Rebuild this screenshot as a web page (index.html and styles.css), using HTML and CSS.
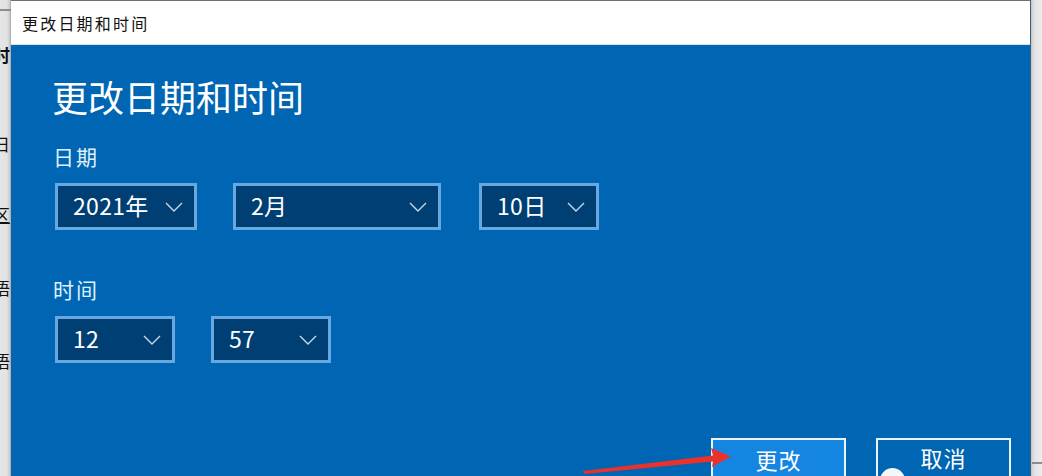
FILE: index.html
```html
<!DOCTYPE html>
<html lang="zh-CN">
<head>
<meta charset="utf-8">
<title>更改日期和时间</title>
<link rel="stylesheet" href="styles.css">
</head>
<body>
<div class="left">
  <div class="left-bar"></div>
  <div class="frag frag-bold"><span>时</span></div>
  <div class="frag frag-2"><span>日</span></div>
  <div class="frag frag-3"><span class="ul">区</span></div>
  <div class="frag frag-4"><span>语</span></div>
  <div class="frag frag-5"><span>语</span></div>
</div>
<div class="dialog">
  <div class="titlebar">更改日期和时间</div>
  <div class="content">
    <h1 class="heading">更改日期和时间</h1>
    <div class="label label-date">日期</div>
    <div class="row">
      <div class="select w-year"><span>2021年</span><svg class="chev" viewBox="0 0 18 10" width="18" height="10"><polyline points="1,1 9,9 17,1"/></svg></div>
      <div class="select w-month"><span>2月</span><svg class="chev" viewBox="0 0 18 10" width="18" height="10"><polyline points="1,1 9,9 17,1"/></svg></div>
      <div class="select w-day"><span>10日</span><svg class="chev" viewBox="0 0 18 10" width="18" height="10"><polyline points="1,1 9,9 17,1"/></svg></div>
    </div>
    <div class="label label-time">时间</div>
    <div class="row">
      <div class="select w-time"><span>12</span><svg class="chev" viewBox="0 0 18 10" width="18" height="10"><polyline points="1,1 9,9 17,1"/></svg></div>
      <div class="select w-time"><span>57</span><svg class="chev" viewBox="0 0 18 10" width="18" height="10"><polyline points="1,1 9,9 17,1"/></svg></div>
    </div>
    <div class="buttons">
      <div class="btn btn-primary">更改</div>
      <div class="btn btn-cancel">取消</div>
    </div>
  </div>
</div>
<div class="right">
  <div class="right-line"></div>
</div>
<div class="dot"></div>
<svg class="arrow" viewBox="0 0 1042 476" width="1042" height="476">
  <polygon points="583,471 713,455.5 711,448 731,456.5 712,467 713,461.5 584,474" fill="#e8322b"/>
</svg>
</body>
</html>
```
FILE: styles.css
```css
html, body {
  margin: 0;
  padding: 0;
}
body {
  width: 1042px;
  height: 476px;
  overflow: hidden;
  display: flex;
  background: #ebebeb;
  font-family: "Noto Sans CJK SC", "Noto Sans", sans-serif;
  position: relative;
}
.left {
  width: 11px;
  flex: none;
  background: linear-gradient(to right, #e6e6e6 0, #e2e2e2 7px, #c8c8c8 10px, #9a9a9a 11px);
  overflow: hidden;
  display: flex;
  flex-direction: column;
}
.left-bar {
  height: 2px;
  margin-top: 9px;
  background: #8e8e8e;
}
.frag {
  display: flex;
  justify-content: flex-end;
  padding-right: 1px;
  white-space: nowrap;
  font-size: 17px;
  line-height: 20px;
  color: #111;
  height: 20px;
}
.frag span { flex: none; }
.frag-bold { font-weight: 700; margin-top: 34px; }
.frag-2 { margin-top: 69px; }
.frag-3 { margin-top: 51px; }
.frag-3 .ul { text-decoration: underline; }
.frag-4 { margin-top: 53px; }
.frag-5 { margin-top: 53px; }

.dialog {
  width: 1020px;
  flex: none;
  display: flex;
  flex-direction: column;
  border-top: 1px solid #707070;
  border-right: 1px solid #3a5f80;
  box-sizing: border-box;
}
.titlebar {
  height: 44px;
  flex: none;
  background: #ffffff;
  display: flex;
  align-items: center;
  padding-left: 11px;
  font-size: 16px;
  letter-spacing: 2.2px;
  color: #111;
  border-bottom: 1px solid #cfe6f2;
  box-sizing: border-box;
}
.content {
  flex: 1;
  background: #0066b3;
  padding: 30px 19px 0 42px;
  display: flex;
  flex-direction: column;
}
.heading {
  margin: 0 0 0 -1px;
  font-size: 36px;
  line-height: 42px;
  font-weight: 400;
  letter-spacing: 0;
  color: #ffffff;
}
.label {
  font-size: 21px;
  line-height: 28px;
  letter-spacing: 2px;
  color: #dff0fb;
}
.label-date { margin-top: 25px; }
.label-time { margin-top: 45px; }
.row {
  display: flex;
  gap: 36px;
  margin-top: 13px;
  margin-left: 2px;
}
.select {
  height: 47px;
  box-sizing: border-box;
  border: 3px solid #67a8e0;
  background: #003f74;
  display: flex;
  align-items: center;
  justify-content: space-between;
  padding: 0 11px 3px 15px;
  color: #ffffff;
  font-size: 23px;
  letter-spacing: 0.3px;
}
.select .chev { margin-top: 3px; }
.w-year { width: 142px; }
.w-month { width: 208px; }
.w-day { width: 120px; margin-left: 2px; }
.w-time { width: 120px; }
.chev {
  flex: none;
  display: block;
}
.chev polyline {
  fill: none;
  stroke: #c3d8ec;
  stroke-width: 1.4;
}
.buttons {
  display: flex;
  justify-content: flex-end;
  gap: 30px;
  margin-top: 75px;
}
.btn {
  width: 135px;
  height: 50px;
  box-sizing: border-box;
  border: 2px solid #eaf2fa;
  color: #ffffff;
  font-size: 22px;
  line-height: 28px;
  letter-spacing: 1px;
  text-align: center;
  padding-top: 5px;
}
.btn-primary { background: #1585e2; }
.btn-cancel { background: #0066b3; padding-top: 3px; }

.right {
  flex: 1;
  background: linear-gradient(to right, #b8c4ce 0, #dcdcdc 2px, #e6e6e6 5px, #ececec 11px);
  display: flex;
  flex-direction: column;
}
.right-line {
  height: 2px;
  margin-top: 462px;
  margin-left: 1px;
  background: #8c8c8c;
}
.dot {
  position: absolute;
  left: 880px;
  top: 468px;
  width: 25px;
  height: 25px;
  border-radius: 50%;
  background: #f4f7fa;
}
.arrow {
  position: absolute;
  left: 0;
  top: 0;
  pointer-events: none;
}
```
